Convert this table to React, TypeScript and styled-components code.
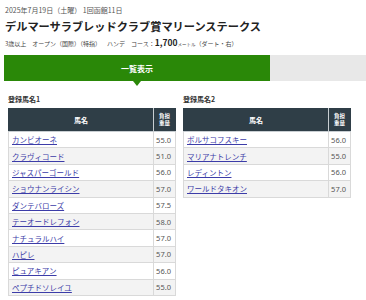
import styled, { createGlobalStyle } from "styled-components";

const GlobalStyle = createGlobalStyle`
  body {
    margin: 0;
    background: #fff;
    font-family: "Noto Sans CJK JP", "Noto Sans", sans-serif;
    color: #222;
  }
`;

type Horse = { name: string; weight: string };

const group1: Horse[] = [
  { name: "カンビオーネ", weight: "55.0" },
  { name: "クラヴィコード", weight: "51.0" },
  { name: "ジャスパーゴールド", weight: "56.0" },
  { name: "ショウナンライシン", weight: "57.0" },
  { name: "ダンテバローズ", weight: "57.5" },
  { name: "テーオードレフォン", weight: "58.0" },
  { name: "ナチュラルハイ", weight: "57.0" },
  { name: "ハピレ", weight: "57.0" },
  { name: "ピュアキアン", weight: "56.0" },
  { name: "ペプチドソレイユ", weight: "55.0" },
];

const group2: Horse[] = [
  { name: "ボルサコフスキー", weight: "56.0" },
  { name: "マリアナトレンチ", weight: "55.0" },
  { name: "レディントン", weight: "56.0" },
  { name: "ワールドタキオン", weight: "57.0" },
];

const EntryTable = ({ title, horses }: { title: string; horses: Horse[] }) => (
  <Column>
    <GroupTitle>{title}</GroupTitle>
    <Table>
      <thead>
        <tr>
          <HeadCell>馬名</HeadCell>
          <WeightHead>
            負担
            <br />
            重量
          </WeightHead>
        </tr>
      </thead>
      <tbody>
        {horses.map((h) => (
          <Row key={h.name}>
            <NameCell>
              <HorseLink href="#">{h.name}</HorseLink>
            </NameCell>
            <WeightCell>{h.weight}</WeightCell>
          </Row>
        ))}
      </tbody>
    </Table>
  </Column>
);

const App = () => (
  <Page>
    <GlobalStyle />
    <RaceHeader>
      <RaceDate>2025年7月19日（土曜） 1回函館11日</RaceDate>
      <RaceTitle>デルマーサラブレッドクラブ賞マリーンステークス</RaceTitle>
      <RaceInfo>
        <span>3歳以上</span>
        <span>オープン（国際）（特指）</span>
        <span>ハンデ</span>
        <span>
          コース：<Distance>1,700</Distance>
          <Unit>メートル</Unit>（ダート・右）
        </span>
      </RaceInfo>
    </RaceHeader>
    <Tabs>
      <Tab active>一覧表示</Tab>
      <Tab />
    </Tabs>
    <Groups>
      <EntryTable title="登録馬名1" horses={group1} />
      <EntryTable title="登録馬名2" horses={group2} />
    </Groups>
  </Page>
);

export default App;

const Page = styled.div`
  width: 366px;
`;

const RaceHeader = styled.div`
  padding: 4px 5px 0;
`;

const RaceDate = styled.div`
  font-size: 7px;
  line-height: 12px;
  color: #555;
`;

const RaceTitle = styled.h1`
  margin: 2px 0 0;
  font-size: 11.2px;
  line-height: 16px;
  font-weight: bold;
  color: #222;
`;

const RaceInfo = styled.div`
  display: flex;
  align-items: baseline;
  gap: 6px;
  margin-top: 2px;
  font-size: 6px;
  line-height: 12px;
  color: #444;
`;

const Distance = styled.b`
  font-size: 8.5px;
  color: #222;
`;

const Unit = styled.span`
  font-size: 4.5px;
`;

const Tabs = styled.div`
  display: flex;
  margin: 5px 0 0 4px;
`;

const Tab = styled.div<{ active?: boolean }>`
  position: relative;
  display: flex;
  align-items: center;
  justify-content: center;
  height: 26px;
  flex: ${({ active }) => (active ? "0 0 266px" : "1")};
  background: ${({ active }) => (active ? "#2a8808" : "#e8e8e8")};
  color: #fff;
  font-size: 8px;
  font-weight: bold;

  &::after {
    content: "";
    display: ${({ active }) => (active ? "block" : "none")};
    position: absolute;
    left: 50%;
    bottom: -5px;
    margin-left: -4px;
    border-left: 4px solid transparent;
    border-right: 4px solid transparent;
    border-top: 5px solid #2a8808;
  }
`;

const Groups = styled.div`
  display: flex;
  gap: 7px;
  padding: 13px 0 0 8px;
`;

const Column = styled.div`
  width: 168px;
`;

const GroupTitle = styled.div`
  font-size: 7px;
  font-weight: bold;
  line-height: 10px;
  color: #333;
  margin-bottom: 4px;
`;

const Table = styled.table`
  width: 100%;
  border-collapse: collapse;
  font-size: 7.5px;
`;

const HeadCell = styled.th`
  height: 22px;
  padding: 0;
  background: #2f3e47;
  color: #fff;
  font-weight: bold;
  font-size: 7px;
  border: 1px solid #c8ced2;
  border-top-color: #2f3e47;
  border-left-color: #2f3e47;
`;

const WeightHead = styled(HeadCell)`
  width: 21px;
  font-size: 5.5px;
  line-height: 7.5px;
  border-right-color: #2f3e47;
`;

const Row = styled.tr`
  &:nth-child(even) {
    background: #f3f3f3;
  }
`;

const NameCell = styled.td`
  height: 15.4px;
  padding: 0 3px;
  border: 1px solid #d9d9d9;
`;

const WeightCell = styled.td`
  padding: 0 4px 0 0;
  text-align: right;
  color: #555;
  font-family: "Noto Sans", sans-serif;
  border: 1px solid #d9d9d9;
`;

const HorseLink = styled.a`
  color: #3c3ca8;
  text-decoration: underline;
`;
